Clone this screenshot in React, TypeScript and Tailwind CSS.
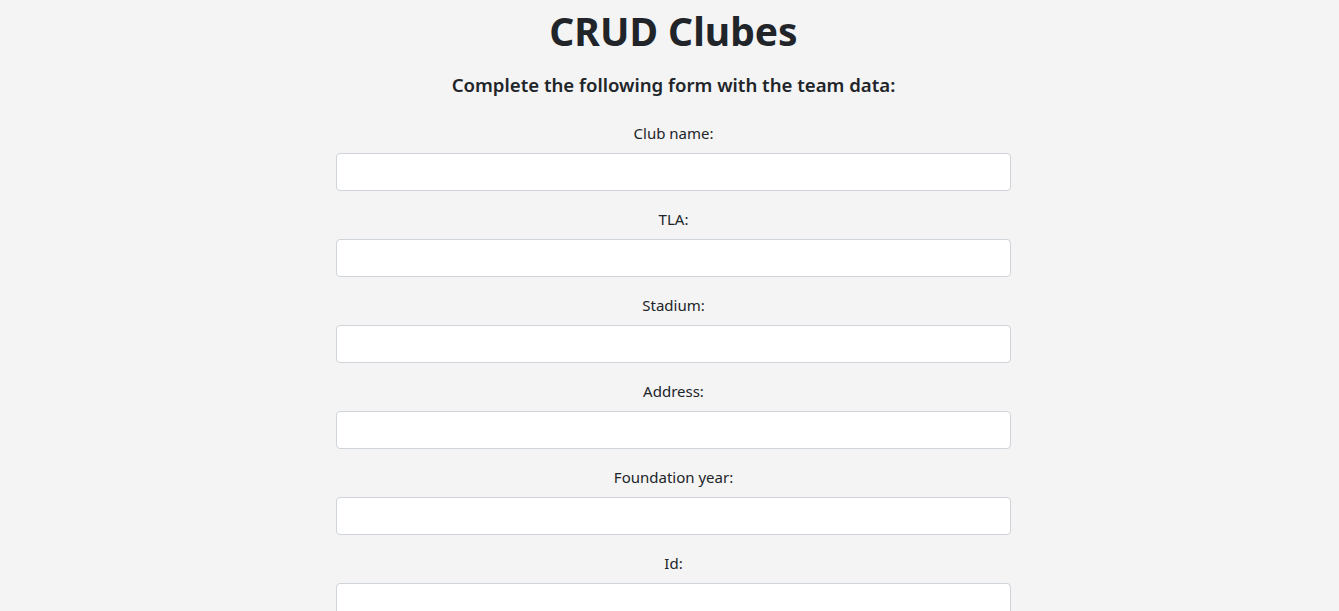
import React from 'react';

const fields = ['Club name:', 'TLA:', 'Stadium:', 'Address:', 'Foundation year:', 'Id:'];

const App: React.FC = () => {
  return (
    <div
      className="min-h-[611px] bg-[#f4f4f4] text-[#212529] pt-[7px] pl-2"
      style={{ fontFamily: '"Noto Sans", "Open Sans", sans-serif' }}
    >
      <h1 className="text-center text-[39px] leading-[48px] font-bold">CRUD Clubes</h1>
      <h2 className="text-center text-[18.6px] leading-[30px] font-semibold mt-[15px]">
        Complete the following form with the team data:
      </h2>
      <form className="w-[675px] mx-auto mt-[21px]">
        {fields.map((label) => (
          <div key={label} className="mb-4">
            <label className="block text-center text-[15px] leading-6 mb-2">{label}</label>
            <input
              type="text"
              className="block w-full h-[38px] bg-white border border-[#ced4da] rounded px-3 outline-none"
            />
          </div>
        ))}
      </form>
    </div>
  );
};

export default App;
